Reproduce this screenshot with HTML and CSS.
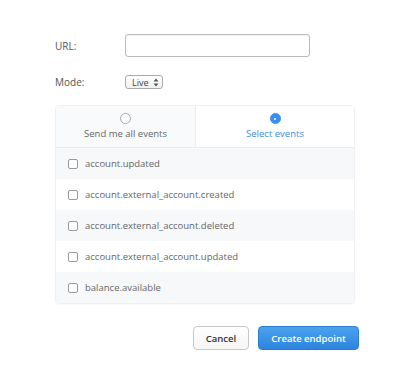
FILE: index.html
```html
<!DOCTYPE html>
<html lang="en">
<head>
  <meta charset="UTF-8" />
  <title>Add endpoint</title>
  <link rel="stylesheet" href="styles.css">
</head>
<body>
  <form class="endpoint-form">
    <div class="field">
      <label class="field-label">URL:</label>
      <input class="url-input" type="text" />
    </div>
    <div class="field field-mode">
      <label class="field-label">Mode:</label>
      <span class="mode-select">Live
        <svg width="6" height="9" viewBox="0 0 6 9"><path d="M3 0.5L5.5 3.5H0.5Z M3 8.5L5.5 5.5H0.5Z" fill="#555"/></svg>
      </span>
    </div>

    <div class="events-panel">
      <div class="tabs">
        <div class="tab">
          <span class="radio"></span>
          <span>Send me all events</span>
        </div>
        <div class="tab tab-active">
          <span class="radio radio-on"></span>
          <span>Select events</span>
        </div>
      </div>
      <div class="event-row shaded"><span class="check"></span>account.updated</div>
      <div class="event-row"><span class="check"></span>account.external_account.created</div>
      <div class="event-row shaded"><span class="check"></span>account.external_account.deleted</div>
      <div class="event-row"><span class="check"></span>account.external_account.updated</div>
      <div class="event-row shaded"><span class="check"></span>balance.available</div>
    </div>

    <div class="actions">
      <button type="button" class="btn btn-cancel">Cancel</button>
      <button type="button" class="btn btn-create">Create endpoint</button>
    </div>
  </form>
</body>
</html>
```

FILE: styles.css
```css
body {
  margin: 0;
  padding: 0;
  background: #fff;
  font-family: "Open Sans", "DejaVu Sans", sans-serif;
  color: #555;
}
.endpoint-form {
  padding: 34px 37px 0 55px;
}
.field {
  display: flex;
  align-items: center;
  height: 23px;
}
.field-mode {
  margin-top: 18px;
  height: 14px;
}
.field-label {
  width: 70px;
  font-size: 10px;
  color: #555;
}
.url-input {
  width: 185px;
  height: 23px;
  box-sizing: border-box;
  border: 1px solid #bbb;
  border-radius: 3px;
  padding: 0 5px;
  margin: 0;
  box-shadow: inset 0 1px 1px rgba(0,0,0,0.06);
}
.mode-select {
  display: inline-flex;
  align-items: center;
  gap: 4px;
  height: 14px;
  box-sizing: border-box;
  padding: 0 3px 0 6px;
  border: 1px solid #aaa;
  border-radius: 3px;
  font-size: 9px;
  color: #444;
  background: linear-gradient(#fff, #f0f0f0);
}
.events-panel {
  margin-top: 16px;
  width: 298px;
  border: 1px solid #eef0f3;
  border-radius: 4px;
  overflow: hidden;
  box-shadow: 0 1px 2px rgba(0,0,0,0.04);
}
.tabs {
  display: flex;
  border-bottom: 1px solid #e8ebef;
}
.tab {
  flex: 0 0 139px;
  height: 41px;
  display: flex;
  flex-direction: column;
  align-items: center;
  justify-content: center;
  gap: 3px;
  background: #f9fafb;
  border-right: 1px solid #eceef1;
  font-size: 9.5px;
  color: #666;
}
.tab-active {
  flex: 1;
  background: #fff;
  border-right: none;
  color: #3a8ee6;
}
.radio {
  width: 9px;
  height: 9px;
  border: 1px solid #aaa;
  border-radius: 50%;
  background: #fff;
}
.radio-on {
  border-color: #3b8ff0;
  background: #3b8ff0;
  position: relative;
}
.radio-on::after {
  content: "";
  position: absolute;
  left: 3.5px;
  top: 3.5px;
  width: 2px;
  height: 2px;
  border-radius: 50%;
  background: #fff;
}
.event-row {
  height: 31px;
  display: flex;
  align-items: center;
  padding-left: 12px;
  font-size: 9.5px;
  color: #666;
  background: #fff;
}
.event-row.shaded {
  background: #f6f8fa;
}
.check {
  width: 8px;
  height: 8px;
  border: 1px solid #999;
  border-radius: 2px;
  background: #fff;
  margin-right: 7px;
}
.actions {
  display: flex;
  justify-content: flex-end;
  gap: 9px;
  margin-top: 22px;
  width: 304px;
}
.btn {
  height: 24px;
  border-radius: 4px;
  font-family: "Open Sans", "DejaVu Sans", sans-serif;
  font-size: 9.5px;
  font-weight: 600;
  padding: 0;
  cursor: pointer;
}
.btn-cancel {
  width: 56px;
  background: linear-gradient(#fff, #f5f5f5);
  border: 1px solid #c8c8c8;
  color: #333;
}
.btn-create {
  width: 101px;
  background: linear-gradient(#4ba2ee, #2c84de);
  border: 1px solid #2a7fd4;
  color: #fff;
}
```
